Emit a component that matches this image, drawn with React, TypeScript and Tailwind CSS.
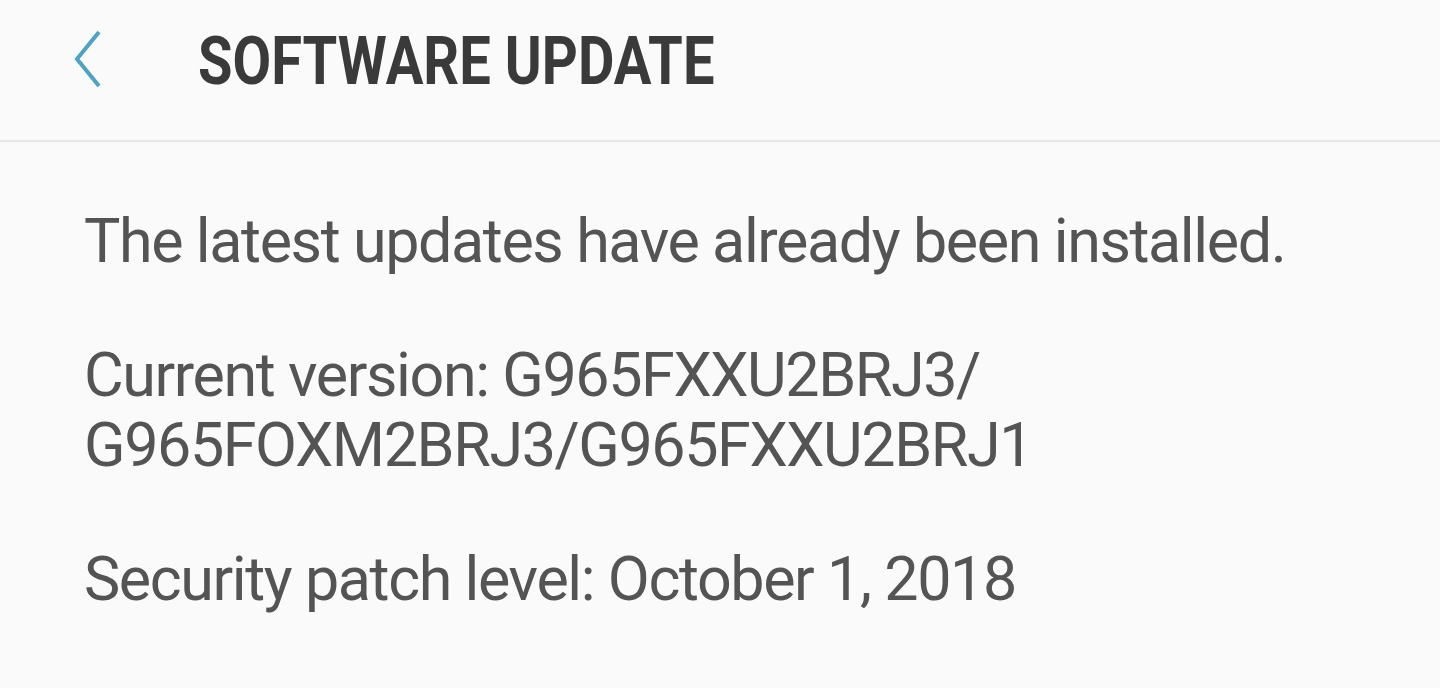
import React from 'react'

const lines = [
  ['The latest updates have already been installed.'],
  ['Current version: G965FXXU2BRJ3/', 'G965FOXM2BRJ3/G965FXXU2BRJ1'],
  ['Security patch level: October 1, 2018'],
]

const App = () => {
  return (
    <div className="w-[1440px] h-[688px] bg-[#fafafa] overflow-hidden">
      <div className="h-[142px] border-b-2 border-[#e6e6e6] flex items-start">
        <button className="w-[198px] h-[120px] flex items-start pl-[74px] pt-[30px]">
          <svg width="28" height="60" viewBox="0 0 28 60" fill="none">
            <polyline points="25,2 3,29 25,56" stroke="#4fa3c2" strokeWidth="4" />
          </svg>
        </button>
        <h1 className="font-['Roboto',sans-serif] font-bold text-[66px] leading-[66px] pt-[29px] text-[#3a3a3a] scale-x-[0.85] origin-left whitespace-nowrap">
          SOFTWARE UPDATE
        </h1>
      </div>

      <div className="pl-[84px] pt-[64px] space-y-[64px] font-['Roboto',sans-serif] text-[61px] leading-[70px] tracking-[-1.4px] text-[#545454]">
        {lines.map((p, i) => (
          <p key={i}>
            {p.map((l) => (
              <span key={l} className="block">{l}</span>
            ))}
          </p>
        ))}
      </div>
    </div>
  )
}

export default App
